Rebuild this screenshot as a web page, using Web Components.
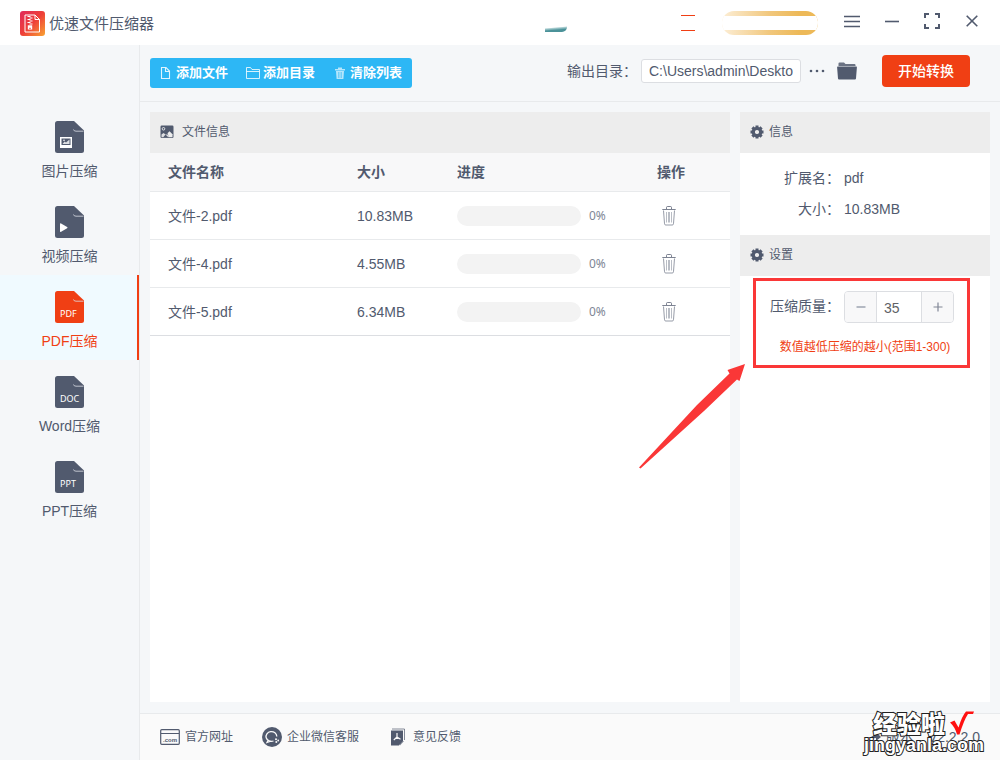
<!DOCTYPE html>
<html lang="zh-CN">
<head>
<meta charset="utf-8">
<meta name="viewport" content="width=device-width, initial-scale=1">
<title>优速文件压缩器</title>
<style>
  :root {
    --ink: #515a6e;
    --accent: #f03f14;
    --blue: #2db7f5;
    --line: #e8eaec;
    --page: #f5f7f9;
    --mark: #fa3737;
  }
  body {
    margin: 0;
    background: var(--page);
    color: var(--ink);
    font: 14px/20px "Liberation Sans", "Noto Sans CJK SC", sans-serif;
  }
</style>
</head>
<body>
<compressor-app></compressor-app>

<script>
const define = (name, html, setup) => customElements.define(name, class extends HTMLElement {
  constructor() {
    super();
    const template = document.createElement('template');
    template.innerHTML = html;
    this.attachShadow({ mode: 'open' }).append(template.content.cloneNode(true));
  }
  connectedCallback() { if (setup) setup(this, this.shadowRoot); }
});

const reset = `
  *, *::before, *::after { box-sizing: border-box; }
  button, input { font: inherit; color: inherit; margin: 0; }
  button { border: 0; background: none; padding: 0; cursor: pointer; }
  a { color: inherit; text-decoration: none; }
  svg { display: block; flex: none; }`;

/* Icons: [width, height, drawing] */
const icons = {
  menu: [16, 16, '<path d="M0 3.5h16M0 8.5h16M0 13.5h16" stroke="currentColor" stroke-width="1.6"/>'],
  min: [14, 16, '<path d="M0 8.5h14" stroke="currentColor" stroke-width="1.6"/>'],
  full: [16, 16, '<path d="M1 5V1h4M11 1h4v4M15 11v4h-4M5 15H1v-4" fill="none" stroke="currentColor" stroke-width="2"/>'],
  close: [12, 12, '<path d="M.7.7l10.6 10.6M11.3.7L.7 11.3" stroke="currentColor" stroke-width="1.6"/>'],
  file: [14, 14, '<path d="M2.500 1.500h4.500l3.500 3.500v7.500h-8zM6.500 1.500v4h4" fill="none" stroke="currentColor" stroke-width="1.100" stroke-opacity=".85"/>'],
  dir: [14, 14, '<path d="M.5 12.500v-11h4l1.500 2h7.500v9zM.5 5.500h13" fill="none" stroke="currentColor" stroke-width="1" stroke-opacity=".8"/>'],
  bin: [14, 14, '<path d="M2 3h3V1.500h4V3h3v1.500H2zM3 5h8l-.6 8H3.600z" fill="currentColor" fill-opacity=".65"/><path d="M5.500 6v6M7 6v6M8.500 6v6" stroke="#2db7f5" stroke-width=".5"/>'],
  trash: [14, 20, '<g fill="none" stroke="currentColor"><path d="M4.500 3V1.500q0-1 1-1h3q1 0 1 1V3M.3 3.500h13.400" stroke-opacity=".75"/><path d="M1.500 4.500l1 13q.1 1.500 1.200 1.500h6.600q1.100 0 1.200-1.500l1-13" stroke-opacity=".6"/><path d="M4.500 6v10.500M6.500 6v10.500M7.500 6v10.500M9.500 6v10.500" stroke-opacity=".5" stroke-width=".8"/></g>'],
  dots: [16, 4, '<circle cx="2" cy="2" r="1.300" fill="currentColor"/><circle cx="8" cy="2" r="1.300" fill="currentColor"/><circle cx="14" cy="2" r="1.300" fill="currentColor"/>'],
  folder: [20, 18, '<path d="M1.500 4V1.500q0-1 1-1h4.500l1.500 1.500h9q1 0 1 1v1z" fill="currentColor" fill-opacity=".85"/><path d="M.7 4.500h18.600q.7 0 .6.700l-.9 11.300q-.1 1-1 1H2q-.9 0-1-1L.1 5.200q0-.7.6-.7z" fill="currentColor"/>'],
  picture: [14, 14, '<rect x=".5" y=".5" width="13" height="12.500" rx="1.200" fill="currentColor"/><circle cx="3.500" cy="3.800" r="1.300" fill="none" stroke="#ededed" stroke-width=".9"/><path d="M1.500 12.200V9.500l2-1.500 2.500 1.700 1-.5 1.500 1 .5 2z" fill="#ededed" fill-opacity=".9"/><path d="M9 12.200l-1.500-4 2-2 3 3v3z" fill="#ededed"/><path d="M3 12.500l2.500-3 3 3z" fill="currentColor"/>'],
  gear: [14, 14, '<circle cx="7" cy="7" r="3.700" fill="none" stroke="currentColor" stroke-width="3.200"/><g stroke="currentColor" stroke-width="3"><path d="M7 .5v2M7 11.500v2M.5 7h2M11.500 7h2M2.400 2.400l1.500 1.500M10.100 10.100l1.500 1.500M2.400 11.600l1.500-1.500M10.100 3.900l1.500-1.500"/></g><circle cx="7" cy="7" r="1.600" fill="#ededed"/>'],
  sheet: [29, 32, '<path d="M2.500 0H19l10 9.500v20q0 2.500-2.500 2.500h-24Q0 32 0 29.500v-27Q0 0 2.500 0z" fill="currentColor"/><path d="M18.500 8.500q.3 1.700 2.500 1.700h7.500" fill="none" stroke="#dde1e8" stroke-width=".8"/>'],
  site: [20, 16, '<rect x=".7" y=".7" width="18.600" height="14.600" rx="1" fill="none" stroke="currentColor" stroke-width="1.200"/><path d="M1 4.500h18" stroke="currentColor"/><text x="10" y="13" text-anchor="middle" font-family="Liberation Sans" font-weight="bold" font-size="6" fill="currentColor">.com</text>'],
  chat: [20, 20, '<circle cx="10" cy="10" r="10" fill="currentColor"/><g fill="none" stroke="#fafafa" stroke-width="1.300"><path d="M14.800 9.500a5.400 4.900 0 1 0-3.300 4.500"/><path d="M6 13.500L5 15.500l3-1"/></g><circle cx="14" cy="12.200" r="1" fill="#fafafa"/><circle cx="16.200" cy="13.500" r=".9" fill="#fafafa"/><circle cx="14.300" cy="15" r="1" fill="#fafafa"/>'],
  note: [20, 18, '<path d="M3 2.500h12v10l-4 5H3z" fill="currentColor"/><path d="M4 1h12.500v11" fill="none" stroke="currentColor" stroke-opacity=".7"/><path d="M12 17.500v-4.500h4z" fill="currentColor" fill-opacity=".7"/><path d="M9 5v4L5.800 12M9 9l3.500 2.200M7.500 10.500h3" fill="none" stroke="#fafafa" stroke-width="1.200"/>'],
  share: [12, 12, '<path d="M0 11q1-7 7-7V1l5 5-5 4V7Q3 7 0 11z" fill="currentColor"/>'],
  logo: [25, 25, '<defs><linearGradient id="g" x1="0" y1="0" x2="1" y2="1"><stop offset="0" stop-color="#e02a5c"/><stop offset=".5" stop-color="#ee3f38"/><stop offset="1" stop-color="#f9a432"/></linearGradient></defs><rect width="25" height="25" rx="3" fill="url(#g)"/><path d="M5 4h10l4.500 4.500V21H5zM15 4v4.500h4.500" fill="none" stroke="#fff" stroke-width="1"/><path d="M7.500 5.500h3M9.500 7h3M7.500 8.500h3M9.500 10h3M7.500 11.500h3M9.500 13h3" stroke="#fff" stroke-width="1.100"/><rect x="7.800" y="14.300" width="4.400" height="4.200" fill="#fff"/><path d="M9 17.300h2" stroke="#ee3f38" stroke-width=".8"/>']
};

define('ui-icon', '<style>:host{display:inline-flex;flex:none}svg{display:block}</style>', (host, root) => {
  if (root.querySelector('svg')) return;
  const [w, h, art] = icons[host.getAttribute('name')];
  root.innerHTML += `<svg width="${w}" height="${h}" viewBox="0 0 ${w} ${h}" aria-hidden="true">${art}</svg>`;
});

define('app-header', `
<style>${reset}
  :host { display: flex; align-items: center; height: 45px; padding: 0 8px 0 20px; background: #fff; }
  .brand { display: flex; align-items: center; gap: 4px; flex: 1; font-size: 15px; padding-top: 2px; }
  .account { display: flex; align-items: center; height: 24px; }
  .avatar { width: 22px; height: 18px; background: linear-gradient(175deg, #fff 14px, #a9cdd0 15px, #4b9299 17px); border-radius: 0 0 5px 0; }
  .badge { width: 14px; height: 16px; margin-left: 114px; border: solid #f03f14; border-width: 1px 0; }
  .pill { width: 96px; height: 24px; margin-left: 27px; border-radius: 12px; overflow: hidden; padding: 5px 0;
    background: linear-gradient(90deg, #fceed6, #f1c77c 50%, #edb958 80%); }
  .pill::before { content: ""; display: block; height: 14px; background: #fff; }
  .window { display: flex; align-self: flex-start; margin-left: 14px; }
  .window button { width: 40px; height: 42px; display: grid; place-items: center; }
</style>
<div class="brand"><ui-icon name="logo"></ui-icon><span>优速文件压缩器</span></div>
<div class="account"><span class="avatar"></span><span class="badge"></span><span class="pill"></span></div>
<div class="window">
  <button aria-label="菜单"><ui-icon name="menu"></ui-icon></button>
  <button aria-label="最小化"><ui-icon name="min"></ui-icon></button>
  <button aria-label="最大化"><ui-icon name="full"></ui-icon></button>
  <button aria-label="关闭"><ui-icon name="close"></ui-icon></button>
</div>`);

define('nav-item', `
<style>${reset}
  :host { display: block; color: var(--ink); }
  a { display: flex; flex-direction: column; align-items: center; gap: 8px; height: 85px; padding: 16px 0 0; }
  :host([active]) { color: var(--accent); background: #f0faff; box-shadow: inset -2px 0 var(--accent); }
  .icon { display: grid; }
  .icon > * { grid-area: 1 / 1; }
  .tag { align-self: end; height: 16px; padding-left: 5px; color: #fff; font: 9px/14px "Noto Sans", sans-serif; }
</style>
<a href="#"><span class="icon"><ui-icon name="sheet"></ui-icon><span class="tag"><slot name="tag"></slot></span></span><slot></slot></a>`);

define('side-nav', `
<style>${reset}
  :host { display: block; width: 140px; flex: none; padding-top: 60px; border-right: 1px solid var(--line); }
</style>
<nav>
  <nav-item><svg slot="tag" width="12" height="12" viewBox="0 0 12 12"><path fill-rule="evenodd" fill="#fff" d="M0 0h12v11H0zM1.500 1.500v6.500h9v-6.500z"/><path d="M2.500 7l2-2.500 1.500 1 3.500-3v4.500z" fill="#fff" fill-opacity=".8"/><circle cx="4" cy="3.200" r=".8" fill="#fff"/></svg>图片压缩</nav-item>
  <nav-item><svg slot="tag" width="12" height="12" viewBox="0 0 12 12"><path d="M0 2.200q0-1.200 1.100-.7l6 3.500q.9.600 0 1.200l-6 3.500Q0 10.300 0 9z" fill="#fff"/></svg>视频压缩</nav-item>
  <nav-item active><span slot="tag">PDF</span>PDF压缩</nav-item>
  <nav-item><span slot="tag">DOC</span>Word压缩</nav-item>
  <nav-item><span slot="tag">PPT</span>PPT压缩</nav-item>
</nav>`);

define('tool-bar', `
<style>${reset}
  :host { display: flex; align-items: center; justify-content: space-between; height: 57px; padding: 0 30px 4px 10px; border-bottom: 1px solid var(--line); }
  .actions { display: flex; gap: 2px; height: 30px; margin-top: 3px; padding: 0 2px 0 1px; border-radius: 3px; background: var(--blue); color: #fff; }
  .actions button { display: flex; align-items: center; gap: 3px; padding: 0 8px; font-size: 13px; font-weight: bold; }
  .output { display: flex; align-items: center; }
  .output button { display: grid; place-items: center; }
  .output label { padding-right: 4px; }
  .output input { width: 160px; height: 24px; padding: 0 7px; border: 1px solid #dcdee2; border-radius: 3px; background: #fff; }
  .more { margin: 0 12px 0 8px; height: 24px; }
  .start { width: 88px; height: 32px; margin-left: 25px; border-radius: 4px; background: var(--accent); color: #fff; font-weight: 500; }
</style>
<div class="actions">
  <button><ui-icon name="file"></ui-icon>添加文件</button>
  <button><ui-icon name="dir"></ui-icon>添加目录</button>
  <button><ui-icon name="bin"></ui-icon>清除列表</button>
</div>
<div class="output">
  <label for="path">输出目录：</label><input id="path" type="text" value="C:\\Users\\admin\\Deskto">
  <button class="more" aria-label="更多"><ui-icon name="dots"></ui-icon></button>
  <button aria-label="打开目录"><ui-icon name="folder"></ui-icon></button>
  <button class="start">开始转换</button>
</div>`);

define('panel-title', `
<style>${reset}
  :host { display: flex; align-items: center; gap: var(--title-gap, 5px); height: 41px; padding: 0 10px 2px; background: #ededed; font-size: 12px; box-sizing: border-box; }
  h2 { margin: 0; font: inherit; }
</style>
<slot name="icon"></slot><h2><slot></slot></h2>`);

define('file-table', `
<style>${reset}
  :host { display: block; background: #fff; --title-gap: 8px; }
  table { width: 100%; border-collapse: separate; border-spacing: 0; table-layout: fixed; }
  th, td { padding: 0 0 0 18px; text-align: left; border-bottom: 1px solid var(--line); }
  th { height: 39px; background: #f8f8f9; }
  td { height: 48px; }
  tr:last-child td { border-color: #dcdee2; }
  .size { width: 100px; }
  .progress { width: 200px; }
  .op { width: 91px; }
  .meter { display: flex; align-items: center; gap: 8px; font: 12px/20px "Noto Sans", sans-serif; color: #808695; }
  .track { width: 124px; height: 20px; border-radius: 10px; background: #f3f3f3; }
  td button { display: grid; margin-left: 5px; }
</style>
<panel-title><ui-icon slot="icon" name="picture"></ui-icon>文件信息</panel-title>
<table>
  <thead><tr><th>文件名称</th><th class="size">大小</th><th class="progress">进度</th><th class="op">操作</th></tr></thead>
  <tbody></tbody>
</table>`, (host, root) => {
  const files = [['文件-2.pdf', '10.83MB'], ['文件-4.pdf', '4.55MB'], ['文件-5.pdf', '6.34MB']];
  root.querySelector('tbody').innerHTML = files.map(([name, size]) => `
    <tr><td>${name}</td><td>${size}</td>
    <td><div class="meter"><span class="track"></span>0%</div></td>
    <td><button aria-label="删除"><ui-icon name="trash"></ui-icon></button></td></tr>`).join('');
});

define('number-stepper', `
<style>${reset}
  :host { display: flex; box-sizing: border-box; width: 110px; height: 32px; border: 1px solid #dcdee2; border-radius: 4px; background: #fff; overflow: hidden; }
  button { width: 31px; display: grid; place-items: center; background: #f8f8f9; }
  input { flex: 1; min-width: 0; padding: 2px 7px 0; border: solid #dcdee2; border-width: 0 1px; background: none; color: #606266; }
</style>
<button aria-label="减少"><svg width="10" height="10"><path d="M.5 5h9" stroke="#9ea4b1" stroke-width="1.500"/></svg></button>
<input type="text" inputmode="numeric" aria-label="压缩质量" value="35">
<button aria-label="增加"><svg width="10" height="10"><path d="M.5 5h9M5 .5v9" stroke="#808695" stroke-width="1.200"/></svg></button>`);

define('settings-panel', `
<style>${reset}
  :host { display: block; position: relative; background: #fff; }
  dl { display: grid; grid-template-columns: 100px 1fr; column-gap: 4px; margin: 0; padding: 10px 0; line-height: 31px; }
  dt { text-align: right; }
  dd { margin: 0; }
  .quality { display: grid; grid-template-columns: 100px auto; column-gap: 4px; justify-content: start; padding-top: 15px; line-height: 30px; }
  .quality span { text-align: right; }
  p { margin: 14px 0 0; text-align: center; font-size: 12px; line-height: 20px; color: var(--accent); }
  .frame { position: absolute; left: 13px; top: 166px; width: 217px; height: 90px; border: 3px solid var(--mark); }
  .arrow { position: absolute; left: -102px; top: 250px; }
</style>
<panel-title><ui-icon slot="icon" name="gear"></ui-icon>信息</panel-title>
<dl><dt>扩展名：</dt><dd>pdf</dd><dt>大小：</dt><dd>10.83MB</dd></dl>
<panel-title><ui-icon slot="icon" name="gear"></ui-icon>设置</panel-title>
<div class="quality"><span>压缩质量：</span><number-stepper></number-stepper></div>
<p>数值越低压缩的越小(范围1-300)</p>
<div class="frame"></div>
<svg class="arrow" width="110" height="110" viewBox="0 0 110 110"><path d="M1 105.500L59 43 91.500 11.500 89.500 8 107 2 101.500 19 99 17.500 66 49 2.500 106.500z" fill="#fa3737"/></svg>`);

define('app-footer', `
<style>${reset}
  :host { display: flex; align-items: center; justify-content: space-between; position: relative; height: 47px; padding: 0 20px; border-top: 1px solid var(--line); background: #fafafa; box-sizing: border-box; }
  nav { display: flex; gap: 29px; font-size: 12px; }
  a, .version { display: flex; align-items: center; gap: 5px; }
  .mark { position: absolute; right: 16px; bottom: 5px; display: grid; justify-items: center; color: #fff; font-weight: bold; -webkit-text-stroke: 2px #222; paint-order: stroke fill; }
  .name { display: flex; gap: 4px; font: 900 24px/24px "Noto Sans CJK SC", sans-serif; }
  .url { font-size: 18px; line-height: 20px; }
</style>
<nav>
  <a href="#"><ui-icon name="site"></ui-icon>官方网址</a>
  <a href="#"><ui-icon name="chat"></ui-icon>企业微信客服</a>
  <a href="#"><ui-icon name="note"></ui-icon>意见反馈</a>
</nav>
<div class="version"><ui-icon name="share"></ui-icon><span>版本：V2.2.2.0</span></div>
<div class="mark"><span class="name">经验啦<svg width="26" height="24" viewBox="0 0 26 24"><path d="M1 11.500l4.500-2 4 7Q13 5 17 .5h8l-1 2.500h-5Q15 9 10.500 23.500H8Q6 16 1 11.500z" fill="#f11"/></svg></span><span class="url">jingyanla.com</span></div>`);

define('compressor-app', `
<style>${reset}
  :host { display: flex; flex-direction: column; min-height: 100vh; }
  .body { display: flex; flex: 1; }
  .main { display: flex; flex-direction: column; flex: 1; min-width: 0; }
  .content { display: grid; grid-template-columns: 1fr 250px; gap: 10px; flex: 1; padding: 10px 10px 11px; }
  app-header, tool-bar { box-sizing: border-box; }
</style>
<app-header></app-header>
<div class="body">
  <side-nav></side-nav>
  <div class="main">
    <tool-bar></tool-bar>
    <main class="content"><file-table></file-table><settings-panel></settings-panel></main>
    <app-footer></app-footer>
  </div>
</div>`);
</script>
</body>
</html>
